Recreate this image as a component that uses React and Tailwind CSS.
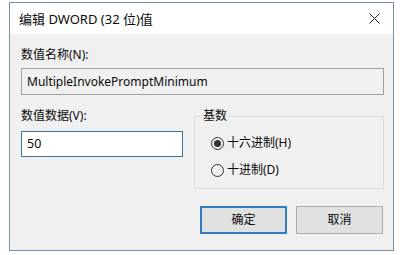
export default function App() {
  const font = { fontFamily: '"Noto Sans","Noto Sans CJK SC",sans-serif' };
  return (
    <div
      className="w-[403px] h-[255px] bg-white overflow-hidden pl-[9px] pt-[2px] text-[12px] leading-[16px] text-[#0a0a0a]"
      style={font}
    >
      <div className="w-[385px] h-[249px] border border-[#7390b0] flex flex-col bg-white">
        {/* title bar */}
        <div className="h-[31px] flex items-center justify-between pl-[9px] pr-[9px] bg-white">
          <span className="text-[13px]">编辑 DWORD (32 位)值</span>
          <svg width="11" height="11" viewBox="0 0 11 11" className="mr-[4px]">
            <path d="M0.5 0.5 L10.5 10.5 M10.5 0.5 L0.5 10.5" stroke="#222" strokeWidth="1" fill="none" />
          </svg>
        </div>
        {/* body */}
        <div className="flex-1 bg-[#f0f0f0] pl-[11px] pt-[13px]">
          <div>数值名称(N):</div>
          <div className="mt-[5px] w-[363px] h-[27px] border border-[#a0a0a0] bg-[#f0f0f0] flex items-center pl-[5px] text-[12px]">
            MultipleInvokePromptMinimum
          </div>
          <div className="mt-[13px] flex items-start">
            <div className="w-[162px]">
              <div>数值数据(V):</div>
              <div className="mt-[7px] w-[162px] h-[26px] border border-[#3d72a0] bg-white flex items-center pl-[5px] text-[12.5px]">
                50
              </div>
            </div>
            <fieldset className="ml-[11px] w-[190px] h-[81px] border border-[#dcdcdc] pb-[10px]">
              <legend className="ml-[6px] px-[2px]">基数</legend>
              <div className="mt-[11px] ml-[16px] flex items-center">
                <span className="w-[13px] h-[13px] rounded-full border border-[#333] flex items-center justify-center">
                  <span className="w-[7px] h-[7px] rounded-full bg-[#333]" />
                </span>
                <span className="ml-[3px]">十六进制(H)</span>
              </div>
              <div className="mt-[11px] ml-[16px] flex items-center">
                <span className="w-[13px] h-[13px] rounded-full border border-[#333]" />
                <span className="ml-[3px]">十进制(D)</span>
              </div>
            </fieldset>
          </div>
          <div className="mt-[17px] flex pl-[179px] gap-[9px]">
            <div className="w-[87px] h-[28px] border-2 border-[#2f7bc4] bg-[#e1e1e1] flex items-center justify-center">
              确定
            </div>
            <div className="w-[87px] h-[28px] border border-[#adadad] bg-[#e1e1e1] flex items-center justify-center">
              取消
            </div>
          </div>
        </div>
      </div>
    </div>
  );
}
